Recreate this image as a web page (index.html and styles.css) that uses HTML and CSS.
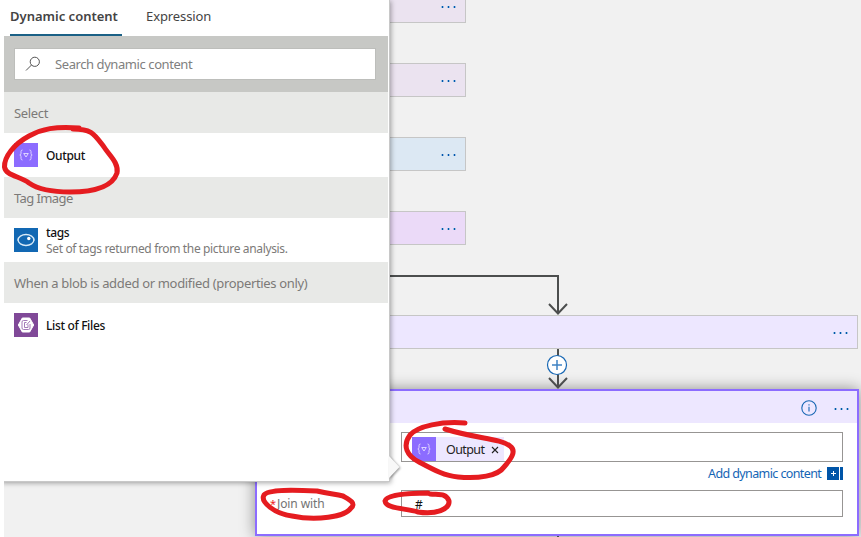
FILE: index.html
```html
<!DOCTYPE html>
<html lang="en">
<head>
<meta charset="utf-8">
<title>Flow designer</title>
<link rel="stylesheet" href="styles.css">
</head>
<body>
<main class="designer">
  <div class="steps">
    <div class="step mauve"><span class="dots"><i></i><i></i><i></i></span></div>
    <div class="step mauve"><span class="dots"><i></i><i></i><i></i></span></div>
    <div class="step blue"><span class="dots"><i></i><i></i><i></i></span></div>
    <div class="step violet"><span class="dots"><i></i><i></i><i></i></span></div>
  </div>
  <div class="step select-step"><span class="dots"><i></i><i></i><i></i></span></div>

  <section class="join-card">
    <header class="join-head">
      <svg class="info" width="16" height="16" viewBox="0 0 16 16"><circle cx="8" cy="8" r="7.2"/><path d="M8 6.800v4.700M8 4.200v1.300"/></svg>
      <span class="dots"><i></i><i></i><i></i></span>
    </header>
    <div class="join-body">
      <div class="field from">
        <span class="label"></span>
        <div class="input">
          <span class="token"><span class="icon data"><svg width="24" height="24" viewBox="0 0 24 24"><path d="M8.500 7q-1.500 0-1.500 1.500v1.800q0 1.700-1.200 1.700 1.200 0 1.200 1.700v1.800q0 1.500 1.500 1.500M15.500 7q1.500 0 1.500 1.500v1.800q0 1.700 1.200 1.700-1.200 0-1.200 1.700v1.800q0 1.500-1.500 1.500M9.700 10.500h4.600L12 14z"/></svg></span><span class="token-text">Output</span><svg class="close" width="8" height="8" viewBox="0 0 8 8"><path d="M1 1l6 6M7 1L1 7"/></svg></span>
        </div>
      </div>
      <div class="add-row"><span class="add">Add dynamic content</span><span class="add-icon"><svg width="16" height="13" viewBox="0 0 16 13"><path d="M0 0h12v13H0zM13 0h3v13h-3z" fill="#0055a8"/><path d="M6.500 4v5M4 6.500h5" stroke="#fff"/></svg></span></div>
      <div class="field with">
        <span class="label"><b>*</b><span class="join-label">Join with</span></span>
        <div class="input hash">#</div>
      </div>
    </div>
  </section>

  <svg class="wires" width="861" height="537" viewBox="0 0 861 537">
    <path d="M380 276H558V313M549 304l9 9.500 9-9.500M558 349v38M549 378l9 9.500 9-9.500"/>
    <path d="M558 536v2"/>
    <circle cx="557" cy="365" r="9.500"/>
    <path class="plus" d="M557 360v10M552 365h10"/>
  </svg>
</main>

<aside class="panel">
  <nav class="tabs"><span class="tab active">Dynamic content</span><span class="tab">Expression</span></nav>
  <div class="search"><div class="search-box">
    <svg width="16" height="16" viewBox="0 0 16 16"><circle cx="9.800" cy="5.800" r="4.600"/><path d="M6.500 9L1 14.500"/></svg>
    <span class="placeholder">Search dynamic content</span>
  </div></div>
  <h3>Select</h3>
  <div class="item"><span class="icon data"><svg width="24" height="24" viewBox="0 0 24 24"><path d="M8.500 7q-1.500 0-1.500 1.500v1.800q0 1.700-1.200 1.700 1.200 0 1.200 1.700v1.800q0 1.500 1.500 1.500M15.500 7q1.500 0 1.500 1.500v1.800q0 1.700 1.200 1.700-1.200 0-1.200 1.700v1.800q0 1.500-1.500 1.500M9.700 10.500h4.600L12 14z"/></svg></span><div class="item-text"><span class="name">Output</span></div></div>
  <h3 class="h-tag">Tag Image</h3>
  <div class="item"><span class="icon vision"><svg width="24" height="24" viewBox="0 0 24 24"><ellipse cx="12" cy="12" rx="7.900" ry="5.500"/><path d="M4.300 12h-.8M19.700 12h.8"/><circle cx="14.800" cy="10.500" r="1.700"/></svg></span><div class="item-text"><span class="name">tags</span><span class="desc">Set of tags returned from the picture analysis.</span></div></div>
  <h3>When a blob is added or modified (properties only)</h3>
  <div class="item"><span class="icon blob"><svg width="24" height="24" viewBox="0 0 24 24"><path class="hex" d="M8.300 5h7.400l4 7-4 7H8.300l-4-7z"/><path d="M13.500 7.500H9.500q-1.500 0-1.500 1.500v6q0 1.500 1.500 1.500h5q1.500 0 1.500-1.500V11M10.500 9.500v5h3.500v-3M10.500 9.500h2M12.500 12l3.500-4"/></svg></span><div class="item-text"><span class="name">List of Files</span></div></div>
</aside>
<svg class="beak" width="14" height="30" viewBox="0 0 14 30"><path d="M0 4l10.500 11L0 26z"/></svg>

<svg class="marks" width="861" height="537" viewBox="0 0 861 537">
  <path d="M79 128C55 126 42 129 29 136C14 144 4 157 4.500 167C6 176 20 176 29 183C39 190 52 192 70 192C91 192 112 188 117 173C119 163 109 155 104 147C94 134 92 129 73 129"/>
  <path d="M465 423C442 421 418 426 410 435C402 446 407 456 419 462C434 470 445 476 458 477C478 479 498 476 504 467C511 459 517 451 510 446C500 438 477 439 445 429"/>
  <path d="M317 491C295 490 268 489 264 495C260 502 275 514 292 516C316 521 345 517 351 508C357 503 348 499 343 496C335 494 329 494 317 491"/>
  <path d="M428 493C405 493 386 495 385 501C386 509 405 508 418 512C436 515 450 509 449 501C446 493 439 495 430 494"/>
</svg>
</body>
</html>
```
FILE: styles.css
```css
* { box-sizing: border-box; }
body {
  margin: 0;
  width: 861px;
  height: 537px;
  overflow: hidden;
  position: relative;
  background: #fff;
  font-family: "Noto Sans", "Open Sans", sans-serif;
  font-size: 13px;
}
.designer {
  position: absolute;
  inset: 0 0 0 4px;
  overflow: hidden;
  background: #f1f1f1;
}
.steps {
  position: absolute;
  top: -11px;
  left: 250px;
  width: 212px;
  display: flex;
  flex-direction: column;
  gap: 40px;
}
.step {
  height: 34px;
  border: 1px solid #c6c6c6;
  display: flex;
  align-items: center;
  justify-content: flex-end;
  padding-right: 9px;
}
.mauve { background: #ebe3f0; }
.blue { background: #dce8f3; }
.violet { background: #ebdaf8; }
.select-step {
  position: absolute;
  top: 315px;
  left: 250px;
  width: 604px;
  background: #ede7ff;
}
.dots { display: flex; gap: 3px; padding-top: 2px; }
.dots i { width: 3px; height: 2px; background: linear-gradient(90deg, #9dbfe0 1px, #0055ad 1px 2px, #9dbfe0 2px); }
.join-card {
  position: absolute;
  left: 251px;
  top: 389px;
  width: 604px;
  height: 147px;
  border: 2px solid #8c6cff;
  background: #fff;
  box-shadow: 0 0 14px rgba(0, 0, 0, .42);
}
.join-head {
  height: 32px;
  background: #ede7ff;
  display: flex;
  align-items: center;
  justify-content: flex-end;
  gap: 17px;
  padding: 1px 8px 0 0;
}
.info { fill: none; stroke: #1767b4; stroke-width: 1.1; }
.join-body { padding: 9px 14px 0 0; }
.field { display: flex; }
.label { width: 144px; flex: none; padding: 5px 0 0 13px; display: flex; color: #737373; font-size: 12px; line-height: 17px; }
.label b { color: #e22; font-weight: 400; font-size: 11px; width: 7px; }
.join-label { letter-spacing: -.1px; }
.input { flex: 1; border: 1px solid #979593; display: flex; }
.from .input { height: 30px; padding: 4px 0 0 10px; }
.with .input { height: 27px; padding: 5px 0 0 13px; line-height: 17px; font-size: 12px; color: #111; }
.token { display: flex; align-items: center; width: 92px; height: 24px; background: #ede7ff; color: #222; }
.token-text { margin-left: 10px; width: 45px; white-space: nowrap; font-size: 12.5px; letter-spacing: -.6px; padding-top: 1px; }
.close { fill: none; stroke: #222; stroke-width: 1.1; margin-top: 2px; }
.add-row { height: 28px; display: flex; justify-content: flex-end; align-items: center; padding-bottom: 6px; color: #1565b5; }
.add { width: 119px; white-space: nowrap; font-size: 12.5px; letter-spacing: -.6px; }
.add-icon { display: flex; }
.wires { position: absolute; left: -4px; top: 0; fill: none; stroke: #4c4e4e; stroke-width: 2; }
.wires circle { fill: #fff; stroke: #1767b4; stroke-width: 1.2; }
.wires .plus { stroke: #3f82c3; stroke-width: 1.5; }

.panel {
  position: absolute;
  left: 0;
  top: 0;
  width: 390px;
  height: 482px;
  padding: 0 1px 0 4px;
  border-right: 1px solid #c8c8c8;
  border-bottom: 1px solid #c8c8c8;
  background: #fff;
  box-shadow: 1px 1px 5px rgba(0, 0, 0, .35);
  clip-path: inset(0 -12px -12px 4px);
}
.tabs { height: 36px; display: flex; gap: 24px; padding-left: 6px; color: #444; }
.tab { height: 36px; line-height: 18px; padding-top: 7px; white-space: nowrap; letter-spacing: -.1px; }
.active { width: 112px; border-bottom: 2px solid #1b6186; font-weight: 600; color: #444; letter-spacing: 0; }
.search { height: 56px; padding: 12px 12px 0 10px; background: #c7c8c5; }
.search-box { height: 32px; border: 1px solid #bdbebb; background: #fff; display: flex; align-items: center; padding-left: 10px; color: #808080; }
.search-box svg { fill: none; stroke: #555; margin-right: 14px; }
.placeholder { white-space: nowrap; letter-spacing: -.42px; }
h3 { margin: 0; height: 41px; line-height: 41px; padding: 1px 0 0 10px; background: #e8e9e7; color: #7c7a78; font-weight: 400; font-size: 13px; letter-spacing: -.33px; white-space: nowrap; }
.h-tag { letter-spacing: -.6px; }
.item { height: 44px; padding-left: 10px; display: flex; align-items: center; }
.item-text { display: flex; flex-direction: column; margin-left: 8px; line-height: 16px; padding-top: 2px; white-space: nowrap; font-size: 12px; letter-spacing: -.35px; }
.name { font-weight: 500; color: #111; }
.desc { color: #7c7a78; }
.icon { width: 24px; height: 24px; display: block; flex: none; }
.icon svg { display: block; fill: none; stroke: #fff; }
.data { background: #8c6cff; }
.data svg { stroke: #e6deff; stroke-width: .9; }
.vision { background: #1268b3; }
.vision svg { stroke-width: 1.3; stroke: #d9eaf7; }
.vision circle { fill: #fff; stroke: none; }
.blob { background: #804998; }
.blob svg { stroke: #a57bb8; }
.blob .hex { fill: #fff; stroke: #fff; stroke-linejoin: round; }
.beak { position: absolute; left: 389px; top: 452px; fill: #f8f8f8; stroke: none; filter: drop-shadow(1px 1px 1px rgba(0, 0, 0, .4)); }
.marks { position: absolute; left: 0; top: 0; fill: none; stroke: #e51c20; stroke-width: 5; stroke-linecap: round; stroke-linejoin: round; pointer-events: none; }
```
